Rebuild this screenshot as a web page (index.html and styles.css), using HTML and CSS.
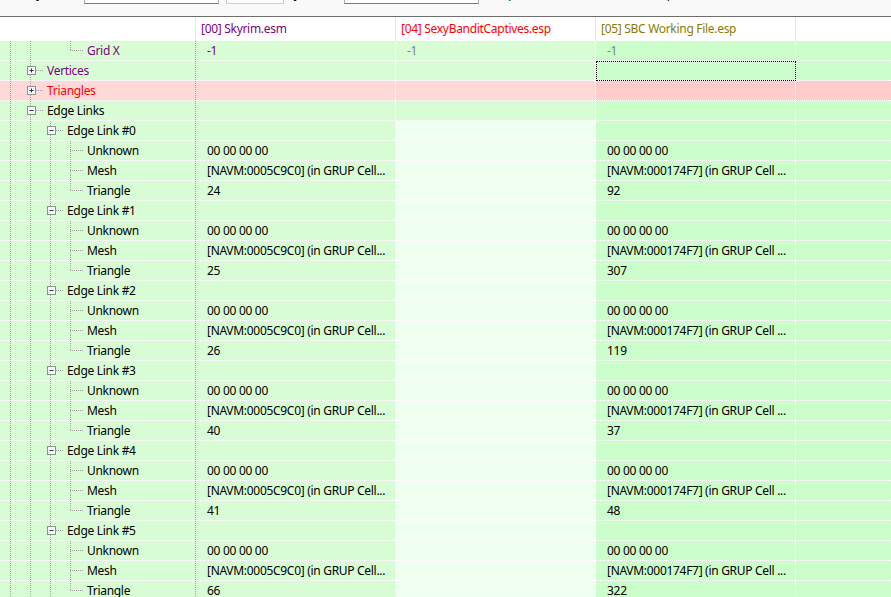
FILE: index.html
```html
<!DOCTYPE html>
<html lang="en">
<head>
    <meta charset="UTF-8">
    <meta name="viewport" content="width=device-width, initial-scale=1.0">
    <title>xEdit - Record View</title>
    <link rel="stylesheet" href="styles.css">
</head>
<body>
    <!-- Toolbar (mostly scrolled out of view) -->
    <div class="toolbar">
        <span class="tb-label tb-key">Key _</span>
        <span class="tb-field"></span>
        <span class="tb-btn"></span>
        <span class="tb-label tb-by">by _</span>
        <span class="tb-field"></span>
        <span class="tb-label tb-opt">Compare</span>
        <span class="tb-label tb-show">[Show parent files]</span>
    </div>

    <!-- Column headers -->
    <div class="grid-header">
        <div class="hcell"></div>
        <div class="hcell file-master">[00] Skyrim.esm</div>
        <div class="hcell file-conflict">[04] SexyBanditCaptives.esp</div>
        <div class="hcell file-override">[05] SBC Working File.esp</div>
        <div class="hcell last"></div>
    </div>

    <div class="grid-body" id="gridBody"></div>

    <script>
        const MESH_00 = '[NAVM:0005C9C0] (in GRUP Cell...';
        const MESH_05 = '[NAVM:000174F7] (in GRUP Cell ...';
        const tri00 = [24, 25, 26, 40, 41, 66];
        const tri05 = [92, 307, 119, 37, 48, 322];

        // Build the list of rows
        const rows = [
            { tree: ['ln', 'ln', 'sp', 'elbow'], label: 'Grid X', color: 'purple',
              vals: [['-1', 'purple'], ['-1', 'grey'], ['-1', 'grey']] },
            { tree: ['ln', 'plus'], label: 'Vertices', color: 'purple', focus: true },
            { tree: ['ln', 'plus'], label: 'Triangles', color: 'red', pink: true },
            { tree: ['ln', 'minus'], label: 'Edge Links' }
        ];

        for (let i = 0; i < 6; i++) {
            rows.push({ tree: ['ln', 'ln', 'minus'], label: 'Edge Link #' + i, light: true });
            rows.push({ tree: ['ln', 'ln', 'ln', 'tee'], label: 'Unknown', light: true,
                        vals: [['00 00 00 00'], [''], ['00 00 00 00']] });
            rows.push({ tree: ['ln', 'ln', 'ln', 'tee'], label: 'Mesh', light: true,
                        vals: [[MESH_00], [''], [MESH_05]] });
            rows.push({ tree: ['ln', 'ln', 'ln', 'elbow'], label: 'Triangle', light: true,
                        vals: [[String(tri00[i])], [''], [String(tri05[i])]] });
        }

        function expander(kind) {
            const plus = kind === 'plus' ? '<path d="M4.5 2.5v4"/>' : '';
            return `<span class="node">
                <svg class="box" width="9" height="9" viewBox="0 0 9 9">
                    <rect x="0.5" y="0.5" width="8" height="8" fill="#f5f5f5" stroke="#919191"/>
                    <g stroke="#2d3550" stroke-width="1"><path d="M2.5 4.5h4"/>${plus}</g>
                </svg>
            </span>`;
        }

        function valueCell(cls, val) {
            const text = val ? val[0] : '';
            const color = val && val[1] ? val[1] : '';
            return `<div class="cell ${cls}"><span class="value ${color}">${text}</span></div>`;
        }

        const body = document.getElementById('gridBody');
        rows.forEach(r => {
            const vals = r.vals || [];
            const gutter = r.tree.map(p =>
                (p === 'plus' || p === 'minus') ? expander(p) : `<span class="${p}"></span>`
            ).join('');

            const row = document.createElement('div');
            row.className = 'row' + (r.pink ? ' row-pink' : '');
            row.innerHTML = `
                <div class="cell tree">${gutter}<span class="label ${r.color || ''}">${r.label}</span></div>
                ${valueCell('c00', vals[0])}
                ${valueCell('c04' + (r.light ? ' light' : ''), vals[1])}
                ${valueCell('c05' + (r.focus ? ' focus' : ''), vals[2])}
                <div class="cell rest"></div>
            `;
            body.appendChild(row);
        });
    </script>
</body>
</html>
```

FILE: styles.css
```css
* {
    margin: 0;
    padding: 0;
    box-sizing: border-box;
}

body {
    background-color: #ffffff;
    color: #000;
    font-family: 'Noto Sans', 'Open Sans', sans-serif;
    font-size: 12px;
    letter-spacing: -0.3px;
    overflow: hidden;
}

/* Toolbar */
.toolbar {
    display: flex;
    align-items: flex-start;
    height: 17px;
    background-color: #f9f9f9;
    border-bottom: 1px solid #6e6e6e;
    overflow: hidden;
}

.tb-label {
    margin-top: -14px;
    line-height: 16px;
    white-space: nowrap;
    flex: none;
}

.tb-key {
    width: 84px;
    text-align: right;
    padding-right: 34px;
}

.tb-field {
    flex: none;
    width: 135px;
    height: 18px;
    margin-top: -14px;
    background-color: #fff;
    border: 1px solid #ababab;
    border-bottom-color: #7a7a7a;
}

.tb-btn {
    flex: none;
    width: 58px;
    height: 18px;
    margin: -14px 0 0 7px;
    background-color: #fdfdfd;
    border: 1px solid #d0d0d0;
}

.tb-by {
    width: 60px;
    padding-left: 3px;
}

.tb-opt {
    width: 151px;
    padding-left: 4px;
}

.tb-show {
    padding-left: 1px;
}

/* Header */
.grid-header {
    display: grid;
    grid-template-columns: 196px 200px 200px 200px 1fr;
    height: 24px;
    background-color: #fff;
}

.hcell {
    line-height: 24px;
    padding-left: 5px;
    border-right: 1px solid #e5e5e5;
    white-space: nowrap;
    overflow: hidden;
}

.hcell.last {
    border-right: none;
}

.file-master {
    color: #800080;
}

.file-conflict {
    color: #ff0000;
}

.file-override {
    color: #8a7c00;
}

/* Rows */
.row {
    display: grid;
    grid-template-columns: 196px 200px 200px 200px 1fr;
    height: 20px;
}

/* dotted grid lines: right edge + bottom edge */
.cell {
    height: 20px;
    line-height: 19px;
    white-space: nowrap;
    overflow: hidden;
    background-color: #d8fdd5;
    background-image:
        repeating-linear-gradient(to bottom, #fff 0 1px, transparent 1px 2px),
        repeating-linear-gradient(to right, #fff 0 1px, transparent 1px 2px);
    background-position: right top, left bottom;
    background-size: 1px 100%, 100% 1px;
    background-repeat: no-repeat;
}

.cell.tree {
    display: flex;
    background-image:
        repeating-linear-gradient(to bottom, #a09fb0 0 1px, transparent 1px 2px),
        repeating-linear-gradient(to right, #fff 0 1px, transparent 1px 2px);
}

.cell.c05,
.cell.rest {
    background-color: #ccfecc;
}

.cell.rest {
    background-size: 0 0, 100% 1px;
}

.cell.c04.light {
    background-color: #effff0;
}

.row-pink .cell {
    background-color: #ffd8d8;
}

.row-pink .cell.c05,
.row-pink .cell.rest {
    background-color: #ffcccc;
}

.cell.focus {
    outline: 1px dotted #000;
    outline-offset: -1px;
}

.value {
    padding-left: 11px;
}

/* Tree gutter */
.ln,
.sp {
    flex: none;
    width: 20px;
    height: 19px;
}

.ln {
    background: repeating-linear-gradient(to bottom, #a0a0a0 0 1px, transparent 1px 2px) 10px 0 / 1px 100% no-repeat;
}

.tee,
.node {
    flex: none;
    width: 27px;
    height: 19px;
    background:
        repeating-linear-gradient(to bottom, #a0a0a0 0 1px, transparent 1px 2px) 10px 0 / 1px 100% no-repeat,
        repeating-linear-gradient(to right, #a0a0a0 0 1px, transparent 1px 2px) 10px 9px / 13px 1px no-repeat;
}

.elbow {
    flex: none;
    width: 27px;
    height: 19px;
    background:
        repeating-linear-gradient(to bottom, #a0a0a0 0 1px, transparent 1px 2px) 10px 0 / 1px 10px no-repeat,
        repeating-linear-gradient(to right, #a0a0a0 0 1px, transparent 1px 2px) 10px 9px / 13px 1px no-repeat;
}

.node {
    display: flex;
    align-items: flex-start;
}

.box {
    display: block;
    margin: 5px 0 0 7px;
}

.purple {
    color: #800080;
}

.red {
    color: #ff0000;
}

.grey {
    color: #808080;
}
```
